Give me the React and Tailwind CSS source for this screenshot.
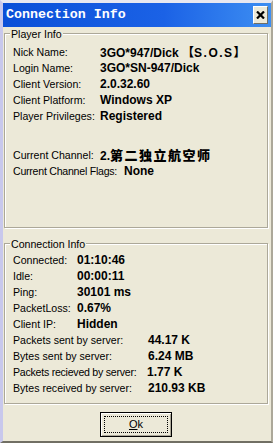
import React from "react";

const lbl = "font-['Liberation_Sans',Arial,sans-serif] text-[10.6px] text-black whitespace-nowrap";
const val = "font-['Liberation_Sans',Arial,sans-serif] text-[12px] font-bold text-black whitespace-nowrap";

function Row({ label, value, w, tight }) {
  return (
    <div className="flex items-center h-[16px] leading-[16px]">
      <div className={lbl + (tight ? " tracking-[-0.25px]" : "")} style={{ width: w }}>{label}</div>
      <div className={val}>{value}</div>
    </div>
  );
}

function Group({ title, className, children }) {
  return (
    <div className={"relative border border-[#aca899] shadow-[inset_1px_1px_0_#ffffff,1px_1px_0_#ffffff] " + className}>
      <span className={"absolute left-[5px] top-[-6px] px-[1px] bg-[#ece9d8] leading-[13px] " + lbl}>{title}</span>
      {children}
    </div>
  );
}

export default function App() {
  return (
    <div className="w-[273px] h-[443px] bg-[#ece9d8] flex flex-col border-t-[3px] border-t-[#e8e8f0] border-l-[3px] border-l-[#c8c8ec] border-r-[2px] border-r-[#aca899] border-b-[2px] border-b-[#716f64] overflow-hidden">
      <div className="h-[24px] shrink-0 flex items-center justify-between bg-[linear-gradient(90deg,#0a4fd8,#1b62e6_60%,#3d8ef2)]">
        <span className="pl-[3px] font-['Liberation_Mono',monospace] font-bold text-[13.3px] text-white leading-none">Connection Info</span>
        <div className="mr-[3px] w-[15px] h-[18px] bg-[#ece9d8] border border-t-white border-l-white border-r-[#716f64] border-b-[#716f64] flex items-center justify-center">
          <svg width="9" height="8" viewBox="0 0 9 8">
            <path d="M1 0.5 L8 7.5 M8 0.5 L1 7.5" stroke="#000" strokeWidth="2.2" />
          </svg>
        </div>
      </div>
      <div className="flex-1 flex flex-col pl-[1px]">
        <Group title="Player Info" className="mt-[6px] w-[264px] h-[195px] pt-[10px] pl-[8px]">
          <div className="flex items-center h-[16px] leading-[16px]">
            <div className={lbl} style={{ width: 87 }}>Nick Name:</div>
            <div className={val}>
              3GO*947/Dick{" "}
              <span className="font-['Noto_Sans_CJK_SC',sans-serif] font-black">【</span><span className="tracking-[1.5px]">S.O.S</span><span className="font-['Noto_Sans_CJK_SC',sans-serif] font-black">】</span>
            </div>
          </div>
          <Row label="Login Name:" value="3GO*SN-947/Dick" w={87} />
          <Row label="Client Version:" value="2.0.32.60" w={87} />
          <Row label="Client Platform:" value="Windows XP" w={87} />
          <Row label="Player Privileges:" value="Registered" w={87} />
          <div className="h-[23px]" />
          <div className="flex items-center h-[16px] leading-[16px]">
            <div className={lbl} style={{ width: 87 }}>Current Channel:</div>
            <div className={val}>
              2.<span className="font-['Noto_Sans_CJK_SC',sans-serif] font-black text-[13px] tracking-[1.5px]">第二独立航空师</span>
            </div>
          </div>
          <Row label="Current Channel Flags:" value="None" w={111} tight />
        </Group>
        <Group title="Connection Info" className="mt-[15px] w-[264px] h-[161px] pt-[8px] pl-[8px]">
          <Row label="Connected:" value="01:10:46" w={64} />
          <Row label="Idle:" value="00:00:11" w={64} />
          <Row label="Ping:" value="30101 ms" w={64} />
          <Row label="PacketLoss:" value="0.67%" w={64} />
          <Row label="Client IP:" value="Hidden" w={64} />
          <Row label="Packets sent by server:" value="44.17 K" w={135} />
          <Row label="Bytes sent by server:" value="6.24 MB" w={135} />
          <Row label="Packets recieved by server:" value="1.77 K" w={134} tight />
          <Row label="Bytes received by server:" value="210.93 KB" w={135} />
        </Group>
        <div className="mt-[8px] flex justify-center pr-[3px]">
          <div className="w-[72px] h-[25px] border border-black bg-[#ece9d8] shadow-[inset_1px_1px_0_#ffffff,inset_-1px_-1px_0_#aca899] p-[3px]">
            <div className="w-full h-full border border-dotted border-black flex items-center justify-center font-['Liberation_Sans',Arial,sans-serif] text-[11px] text-black leading-none">
              <span><span className="underline">O</span>k</span>
            </div>
          </div>
        </div>
      </div>
    </div>
  );
}
